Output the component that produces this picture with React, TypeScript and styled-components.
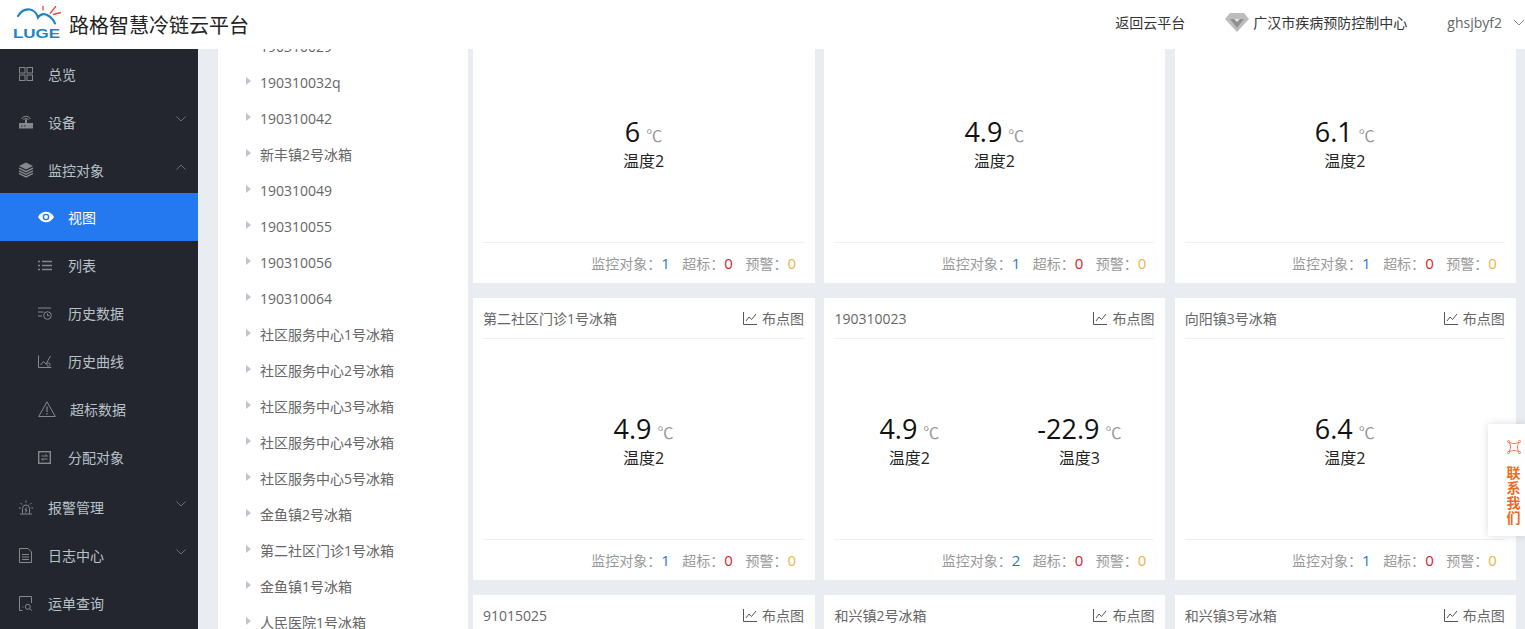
import React from 'react';
import styled, { createGlobalStyle } from 'styled-components';

const Global = createGlobalStyle`
  html, body { margin: 0; padding: 0; height: 100%; overflow: hidden; }
  body { font-family: "Open Sans", "Noto Sans CJK SC", sans-serif; background: #e9ecf1; }
  * { box-sizing: border-box; }
`;

const Page = styled.div`
  width: 1525px; height: 629px; display: flex; flex-direction: column; overflow: hidden; position: relative;
`;
const Header = styled.header`
  height: 49px; flex: none; background: #fff; display: flex; align-items: center; padding-left: 13px; color: #333;
`;
const Brand = styled.div`
  display: flex; align-items: center; gap: 8px; font-size: 20px; color: #222;
`;
const BrandName = styled.span`
  margin-top: -1px;
`;
const HeaderRight = styled.div`
  margin-left: auto; display: flex; align-items: center; font-size: 14px; color: #333; height: 100%; padding-bottom: 6px;
`;
const HeaderLink = styled.span`
  margin-right: 40px;
`;
const Org = styled.span`
  display: flex; align-items: center; gap: 4px; margin-right: 40px;
`;
const UserName = styled.span`
  color: #666; font-size: 14px; margin-top: 1px;
`;
const UserCaret = styled.svg`
  width: 12px; height: 8px; margin: 3px 0 0 11px; flex: none;
`;
const Body = styled.div`
  flex: 1; min-height: 0; display: flex;
`;
const Sidebar = styled.nav`
  width: 198px; flex: none; background: #23262e; color: #b8c2c9; font-size: 14px; overflow: hidden;
`;
const NavRow = styled.div<{ $sub?: boolean; $active?: boolean; $after?: boolean }>`
  height: 48px; display: flex; align-items: center; position: relative;
  padding-left: ${p => (p.$sub ? '38px' : '18px')};
  padding-top: ${p => (p.$sub ? '0' : '2px')};
  margin-top: ${p => (p.$after ? '1px' : '0')};
  background: ${p => (p.$active ? '#2579f0' : 'transparent')};
  color: ${p => (p.$active ? '#fff' : '#b8c2c9')};
`;
const NavIcon = styled.svg<{ $w: number; $h: number; $active?: boolean; $sub?: boolean }>`
  flex: none; width: ${p => p.$w}px; height: ${p => p.$h}px;
  margin-left: ${p => (!p.$sub && p.$w < 16 ? '1px' : '0')};
  margin-right: ${p => (p.$w > 16 ? 14 : 30 - p.$w - (!p.$sub && p.$w < 16 ? 1 : 0))}px;
  color: ${p => (p.$active ? '#fff' : '#85888d')};
`;
const Chevron = styled.svg`
  position: absolute; right: 12px; top: 19px; width: 10px; height: 6px; color: #6c7076;
`;
const Tree = styled.aside`
  width: 250px; flex: none; margin-left: 20px; background: #fff; overflow: hidden; padding-left: 28px;
  color: #666; font-size: 14px;
`;
const TreeList = styled.div`
  margin-top: -21px;
`;
const TreeRow = styled.div`
  height: 36px; display: flex; align-items: center; white-space: nowrap;
`;
const Caret = styled.i`
  width: 0; height: 0; border-left: 5px solid #c0c4cc; border-top: 4px solid transparent; border-bottom: 4px solid transparent;
  margin-right: 9px; margin-top: -3px; flex: none;
`;
const Main = styled.main`
  flex: 1; min-width: 0; overflow: hidden; padding-left: 5px;
`;
const Grid = styled.div`
  display: grid; grid-template-columns: 342px 341px 341px; column-gap: 9.4px; row-gap: 15px; margin-top: -48px;
`;
const Card = styled.section`
  height: 282px; background: #fff; padding: 0 11px 0 10px; display: flex; flex-direction: column;
`;
const CardHead = styled.div`
  height: 41px; flex: none; border-bottom: 1px solid #eef0f3; display: flex; align-items: center; justify-content: space-between;
  font-size: 14px; color: #666;
`;
const Dots = styled.span`
  display: flex; align-items: center; gap: 5px; color: #666; font-size: 14px;
`;
const Values = styled.div`
  flex: 1; min-height: 0; display: flex; align-items: center; justify-content: center; padding: 5px 0 0;
`;
const Reading = styled.div<{ $pair?: boolean }>`
  flex: none; width: ${p => (p.$pair ? '170px' : '100%')}; text-align: center;
`;
const Num = styled.div`
  font-size: 27px; line-height: 28px; color: #111; display: flex; justify-content: center; align-items: baseline; gap: 6px;
`;
const Unit = styled.span`
  font-size: 16px; color: #999;
`;
const Label = styled.div`
  font-size: 16px; color: #222; line-height: 20px; margin-top: 1px;
`;
const CardFoot = styled.div`
  height: 41px; flex: none; border-top: 1px solid #eef0f3; display: flex; align-items: center; justify-content: flex-end;
  font-size: 14px; color: #999; padding-right: 8px; gap: 12.5px;
`;
const Stat = styled.span<{ $c: string }>`
  b { font-weight: 400; color: ${p => p.$c}; font-size: 15px; }
`;
const Contact = styled.aside`
  position: absolute; right: 0; top: 424px; width: 37px; height: 112px; background: #fff; box-shadow: 0 0 8px rgba(0,0,0,.14);
  display: flex; flex-direction: column; align-items: center; padding: 15px 0 0 14px; color: #f06a1e; font-size: 14px; font-weight: 700; line-height: 15px;
`;
const ContactText = styled.div`
  width: 15px; text-align: center; margin-top: 10px; word-break: break-all;
`;

const iconDefs: Record<string, { w: number; h: number; node: React.ReactNode }> = {
  grid: { w: 14, h: 14, node: <><rect x="0.5" y="0.5" width="5.5" height="5.5" /><rect x="8" y="0.5" width="5.5" height="5.5" /><rect x="0.5" y="8" width="5.5" height="5.5" /><rect x="8" y="8" width="5.5" height="5.5" /></> },
  router: { w: 14, h: 14, node: <><path d="M0 8h14v5.500H0Z" fill="currentColor" stroke="none" /><path d="M7 8V4.500" strokeWidth="2" /><path d="M2.500 4a5 5 0 0 1 9 0M4.400 5a3 3 0 0 1 5.200 0" /><path d="M2 11h1.500M5 11h1.500" stroke="#23262e" /></> },
  stack: { w: 16, h: 16, node: <><path d="M8 0.500 15 4 8 7.500 1 4Z" fill="currentColor" stroke="none" /><path d="M1 6.200l7 3.500 7-3.500M1 8.800l7 3.500 7-3.500M1 11.400l7 3.500 7-3.500" strokeWidth="1.400" /></> },
  eye: { w: 16, h: 12, node: <><path d="M0 6c2-3.600 5-5.200 8-5.200S14 2.400 16 6c-2 3.600-5 5.200-8 5.200S2 9.600 0 6Z" fill="currentColor" stroke="none" /><circle cx="8" cy="6" r="3.300" fill="#2579f0" stroke="none" /><circle cx="8" cy="6" r="1.900" fill="currentColor" stroke="none" /></> },
  list: { w: 14, h: 11, node: <path d="M0 1.500h2M0 5.500h2M0 9.500h2M4 1.500h10M4 5.500h10M4 9.500h10" strokeWidth="1.600" /> },
  history: { w: 14, h: 13, node: <><path d="M0 1h13M0 5h5.500M0 9h4" /><circle cx="9.500" cy="8.500" r="3.800" /><path d="M9.500 6.500v2.200h2" /></> },
  curve: { w: 14, h: 13, node: <><path d="M.5 .5v12h13" /><path d="M2.500 10l3-3.500 2.500 2.500L12.500 1" /><circle cx="10.500" cy="9.500" r="1.600" /></> },
  warn: { w: 18, h: 16, node: <><path d="M9 .8 17.300 15.500H.7Z" /><path d="M9 5.500v5.500M9 12v1.600" strokeWidth="1.200" /></> },
  assign: { w: 13, h: 13, node: <><rect x=".7" y=".7" width="11.600" height="11.600" strokeWidth="1.400" /><path d="M3.500 5h6l-2-1.700M9.500 8h-6l2 1.700" /></> },
  alarm: { w: 16, h: 15, node: <><path d="M4.500 13.500V8.500a3.500 3.500 0 0 1 7 0v5M2 14h12M8 .5v2M2.500 3 4 4.500M13.500 3 12 4.500M.8 8h2M13.200 8h2" /><path d="M8.600 7.500 7 10h2l-1.600 2.500" /></> },
  doc: { w: 13, h: 15, node: <><path d="M.5 .5h8.500l3.500 3.500v10.500H.5Z" /><path d="M3 6.500h7M3 9h7M3 11.500h7" /></> },
  search: { w: 14, h: 15, node: <><path d="M12.500 7V.5H.5v14h3" /><circle cx="8.800" cy="10.800" r="2.500" /><path d="m10.700 12.700 2.200 1.800M3.500 11h1" /></> },
};

const Ico = ({ name, active, sub }: { name: string; active?: boolean; sub?: boolean }) => {
  const d = iconDefs[name];
  return (
    <NavIcon $w={d.w} $h={d.h} $active={active} $sub={sub} viewBox={`0 0 ${d.w} ${d.h}`} fill="none" stroke="currentColor" strokeWidth="1">
      {d.node}
    </NavIcon>
  );
};

type NavItem = { t: string; i: string; sub?: boolean; active?: boolean; chev?: 'up' | 'down'; after?: boolean };
const nav: NavItem[] = [
  { t: '总览', i: 'grid' },
  { t: '设备', i: 'router', chev: 'down' },
  { t: '监控对象', i: 'stack', chev: 'up' },
  { t: '视图', i: 'eye', sub: true, active: true },
  { t: '列表', i: 'list', sub: true },
  { t: '历史数据', i: 'history', sub: true },
  { t: '历史曲线', i: 'curve', sub: true },
  { t: '超标数据', i: 'warn', sub: true },
  { t: '分配对象', i: 'assign', sub: true },
  { t: '报警管理', i: 'alarm', chev: 'down', after: true },
  { t: '日志中心', i: 'doc', chev: 'down' },
  { t: '运单查询', i: 'search' },
];

const tree = ['190310029', '190310032q', '190310042', '新丰镇2号冰箱', '190310049', '190310055', '190310056', '190310064', '社区服务中心1号冰箱', '社区服务中心2号冰箱', '社区服务中心3号冰箱', '社区服务中心4号冰箱', '社区服务中心5号冰箱', '金鱼镇2号冰箱', '第二社区门诊1号冰箱', '金鱼镇1号冰箱', '人民医院1号冰箱'];

type R = { v: string; l: string };
type C = { title: string; r: R[]; n: number };
const cards: C[] = [
  { title: '', r: [{ v: '6', l: '温度2' }], n: 1 },
  { title: '', r: [{ v: '4.9', l: '温度2' }], n: 1 },
  { title: '', r: [{ v: '6.1', l: '温度2' }], n: 1 },
  { title: '第二社区门诊1号冰箱', r: [{ v: '4.9', l: '温度2' }], n: 1 },
  { title: '190310023', r: [{ v: '4.9', l: '温度2' }, { v: '-22.9', l: '温度3' }], n: 2 },
  { title: '向阳镇3号冰箱', r: [{ v: '6.4', l: '温度2' }], n: 1 },
  { title: '91015025', r: [{ v: '5.2', l: '温度2' }], n: 1 },
  { title: '和兴镇2号冰箱', r: [{ v: '5.0', l: '温度2' }], n: 1 },
  { title: '和兴镇3号冰箱', r: [{ v: '5.5', l: '温度2' }], n: 1 },
];

const Logo = () => (
  <svg width="48" height="38" viewBox="0 0 48 38" fill="none">
    <path d="M5 10C8 5 13 3 17 3.500 21 4 24 8 25 11.500 27 8.500 30 7.500 33 8.500 37 10 41 14 42 17.500" stroke="#1b84c6" strokeWidth="2.200" strokeLinecap="round" />
    <path d="M30 0v4.500M43 0l-6 7.500M48 6.500l-8 2" stroke="#e8483a" strokeWidth="1.300" />
    <text x="0" y="32" fontFamily="Liberation Sans, sans-serif" fontWeight="700" fontSize="12" fill="#1b84c6" textLength="47" lengthAdjust="spacingAndGlyphs">LUGE</text>
  </svg>
);

const DotsIcon = () => (
  <svg width="14" height="13" viewBox="0 0 14 13" fill="none" stroke="#555" strokeWidth="1"><path d="M.5 0v12.500H14" /><path d="M3 9l3-4 2.500 2.500L13 2" /></svg>
);

const Diamond = () => (
  <svg width="24" height="20" viewBox="0 0 24 20"><path d="M5 1h14l5 6-12 13L0 7Z" fill="#bdbdbd" /><path d="M5 7h14l-7 9Z" fill="#8f8f8f" /><path d="M9 7l3 3 3-3Z" fill="#e4e4e4" /></svg>
);

const TargetIcon = () => (
  <svg width="16" height="16" viewBox="0 0 16 16" fill="none" stroke="#f0784a" strokeWidth="1">
    <path d="M3 3c3 2 7 2 10 0-2 3-2 7 0 10-3-2-7-2-10 0 2-3 2-7 0-10Z" />
    <circle cx="2.500" cy="2.500" r="1" /><circle cx="13.500" cy="2.500" r="1" /><circle cx="2.500" cy="13.500" r="1" /><circle cx="13.500" cy="13.500" r="1" />
  </svg>
);

const ChevronIcon = ({ up }: { up: boolean }) => (
  <Chevron viewBox="0 0 10 6" fill="none" stroke="currentColor" strokeWidth="1">
    <path d={up ? 'M.5 5.500 5 1l4.500 4.500' : 'M.5 .5 5 5 9.500 .5'} />
  </Chevron>
);

export default function App() {
  return (
    <Page>
      <Global />
      <Header>
        <Brand><Logo /><BrandName>路格智慧冷链云平台</BrandName></Brand>
        <HeaderRight>
          <HeaderLink>返回云平台</HeaderLink>
          <Org><Diamond />广汉市疾病预防控制中心</Org>
          <UserName>ghsjbyf2</UserName>
          <UserCaret viewBox="0 0 12 8" fill="none" stroke="#888"><path d="M1 1l5 5 5-5" /></UserCaret>
        </HeaderRight>
      </Header>
      <Body>
        <Sidebar>
          {nav.map(n => (
            <NavRow key={n.t} $sub={n.sub} $active={n.active} $after={n.after}>
              <Ico name={n.i} active={n.active} sub={n.sub} />
              <span>{n.t}</span>
              {n.chev && <ChevronIcon up={n.chev === 'up'} />}
            </NavRow>
          ))}
        </Sidebar>
        <Tree>
          <TreeList>
            {tree.map(t => <TreeRow key={t}><Caret />{t}</TreeRow>)}
          </TreeList>
        </Tree>
        <Main>
          <Grid>
            {cards.map((c, i) => (
              <Card key={i}>
                <CardHead>
                  <span>{c.title}</span>
                  <Dots><DotsIcon />布点图</Dots>
                </CardHead>
                <Values>
                  {c.r.map(r => (
                    <Reading key={r.l} $pair={c.r.length > 1}>
                      <Num>{r.v}<Unit>℃</Unit></Num>
                      <Label>{r.l}</Label>
                    </Reading>
                  ))}
                </Values>
                <CardFoot>
                  <Stat $c="#2f74d0">监控对象：<b>{c.n}</b></Stat>
                  <Stat $c="#d9232e">超标：<b>0</b></Stat>
                  <Stat $c="#e9b44c">预警：<b>0</b></Stat>
                </CardFoot>
              </Card>
            ))}
          </Grid>
        </Main>
      </Body>
      <Contact>
        <TargetIcon />
        <ContactText>联系我们</ContactText>
      </Contact>
    </Page>
  );
}
